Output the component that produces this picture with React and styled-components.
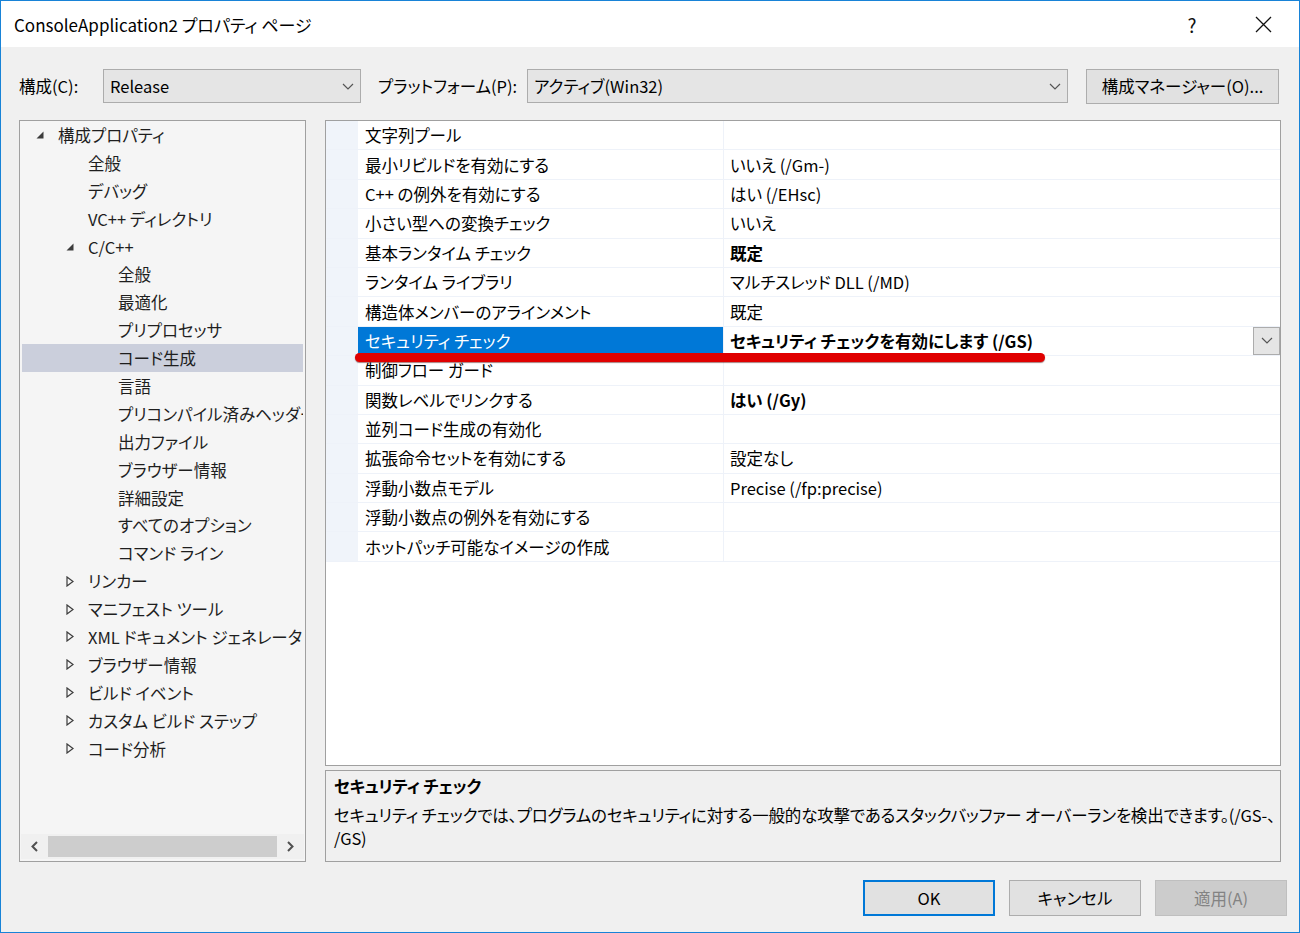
import React from 'react';
import styled, { createGlobalStyle } from 'styled-components';

const GlobalStyle = createGlobalStyle`
  html, body { margin: 0; padding: 0; background: #ffffff; }
  body {
    font-family: "Noto Sans CJK JP", "Noto Sans", sans-serif;
    color: #000;
  }
  * { box-sizing: border-box; }
`;

const treeItems = [
  { label: '構成プロパティ', depth: 0, toggle: 'open' },
  { label: '全般', depth: 1 },
  { label: 'デバッグ', depth: 1 },
  { label: 'VC++ ディレクトリ', depth: 1 },
  { label: 'C/C++', depth: 1, toggle: 'open' },
  { label: '全般', depth: 2 },
  { label: '最適化', depth: 2 },
  { label: 'プリプロセッサ', depth: 2 },
  { label: 'コード生成', depth: 2, selected: true },
  { label: '言語', depth: 2 },
  { label: 'プリコンパイル済みヘッダー', depth: 2 },
  { label: '出力ファイル', depth: 2 },
  { label: 'ブラウザー情報', depth: 2 },
  { label: '詳細設定', depth: 2 },
  { label: 'すべてのオプション', depth: 2 },
  { label: 'コマンド ライン', depth: 2 },
  { label: 'リンカー', depth: 1, toggle: 'closed' },
  { label: 'マニフェスト ツール', depth: 1, toggle: 'closed' },
  { label: 'XML ドキュメント ジェネレーター', depth: 1, toggle: 'closed' },
  { label: 'ブラウザー情報', depth: 1, toggle: 'closed' },
  { label: 'ビルド イベント', depth: 1, toggle: 'closed' },
  { label: 'カスタム ビルド ステップ', depth: 1, toggle: 'closed' },
  { label: 'コード分析', depth: 1, toggle: 'closed' },
];

const props = [
  ['文字列プール', ''],
  ['最小リビルドを有効にする', 'いいえ (/Gm-)'],
  ['C++ の例外を有効にする', 'はい (/EHsc)'],
  ['小さい型への変換チェック', 'いいえ'],
  ['基本ランタイム チェック', '既定', true],
  ['ランタイム ライブラリ', 'マルチスレッド DLL (/MD)'],
  ['構造体メンバーのアラインメント', '既定'],
  ['セキュリティ チェック', 'セキュリティ チェックを有効にします (/GS)', true, true],
  ['制御フロー ガード', ''],
  ['関数レベルでリンクする', 'はい (/Gy)', true],
  ['並列コード生成の有効化', ''],
  ['拡張命令セットを有効にする', '設定なし'],
  ['浮動小数点モデル', 'Precise (/fp:precise)'],
  ['浮動小数点の例外を有効にする', ''],
  ['ホットパッチ可能なイメージの作成', ''],
];

const Window = styled.div`
  width: 1300px;
  height: 933px;
  border: 1px solid #1883d7;
  background: #f0f0f0;
  display: flex;
  flex-direction: column;
  font-size: 16.5px;
  font-feature-settings: "palt";
`;

const TitleBar = styled.div`
  height: 46px;
  background: #ffffff;
  display: flex;
  align-items: center;
  padding-left: 13px;
  padding-right: 6px;
`;

const Title = styled.div`
  flex: 1;
  font-size: 17px;
  color: #000;
`;

const TitleButton = styled.div`
  width: ${p => p.$w}px;
  height: 46px;
  display: flex;
  align-items: center;
  justify-content: center;
  font-size: 19px;
  color: #111;
`;

const Body = styled.div`
  flex: 1;
  display: flex;
  flex-direction: column;
  padding: 22px 12px 16px 18px;
`;

const Toolbar = styled.div`
  height: 34px;
  display: flex;
  align-items: center;
`;

const Label = styled.div`
  width: ${p => p.$w}px;
  flex-shrink: 0;
`;

const Combo = styled.div`
  width: ${p => p.$w}px;
  height: 34px;
  background: #e5e5e5;
  border: 1px solid #acacac;
  display: flex;
  align-items: center;
  justify-content: space-between;
  padding: 0 6px 0 6px;
  margin-right: ${p => p.$mr || 0}px;
`;

const Button = styled.div`
  width: ${p => p.$w}px;
  height: ${p => p.$h || 36}px;
  display: flex;
  align-items: center;
  justify-content: center;
  background: ${p => (p.$disabled ? '#cccccc' : '#e1e1e1')};
  border: ${p => (p.$default ? '2px solid #0078d7' : p.$disabled ? '1px solid #bfbfbf' : '1px solid #adadad')};
  color: ${p => (p.$disabled ? '#838383' : '#000')};
`;

const Main = styled.div`
  margin-top: 17px;
  height: 742px;
  display: flex;
  gap: 19px;
`;

const TreePanel = styled.div`
  width: 287px;
  border: 1px solid #a0a0a0;
  background: #f5f5f5;
  display: flex;
  flex-direction: column;
  padding: 0 1px 2px 1px;
`;

const TreeList = styled.div`
  flex: 1;
  overflow: hidden;
`;

const TreeRow = styled.div`
  height: 27.9px;
  margin: 0 1px;
  display: flex;
  align-items: center;
  white-space: nowrap;
  overflow: hidden;
  padding-left: ${p => 12 + p.$depth * 30}px;
  background: ${p => (p.$selected ? '#cbcfdc' : 'transparent')};
  color: #1e1e1e;
`;

const Toggle = styled.span`
  width: 24px;
  flex-shrink: 0;
  display: flex;
  align-items: center;
  padding-left: 2px;
`;

const HScroll = styled.div`
  height: 25px;
  display: flex;
  align-items: center;
  background: #f0f0f0;
`;

const ScrollArrow = styled.div`
  width: 27px;
  height: 25px;
  display: flex;
  align-items: center;
  justify-content: center;
`;

const ScrollThumb = styled.div`
  flex: 1;
  height: 21px;
  background: #cdcdcd;
`;

const RightCol = styled.div`
  width: 956px;
  display: flex;
  flex-direction: column;
  gap: 4px;
`;

const Grid = styled.div`
  position: relative;
  height: 646px;
  border: 1px solid #a0a0a0;
  background: #ffffff;
`;

const GridRow = styled.div`
  height: 29.4px;
  display: flex;
  border-bottom: 1px solid #eef2f9;
`;

const Strip = styled.div`
  width: 32px;
  background: #f0f4fa;
`;

const NameCell = styled.div`
  width: 366px;
  display: flex;
  align-items: center;
  padding-left: 7px;
  border-right: 1px solid #eef2f9;
  background: ${p => (p.$selected ? '#0078d7' : 'transparent')};
  color: ${p => (p.$selected ? '#ffffff' : '#000')};
  white-space: nowrap;
`;

const ValueCell = styled.div`
  flex: 1;
  display: flex;
  align-items: center;
  justify-content: space-between;
  padding-left: 6px;
  font-weight: ${p => (p.$bold ? 700 : 400)};
  white-space: nowrap;
`;

const DropButton = styled.div`
  width: 27px;
  height: 28px;
  background: #e5e5e5;
  border: 1px solid #acacac;
  display: flex;
  align-items: center;
  justify-content: center;
`;

const Marker = styled.div`
  position: absolute;
  left: 29px;
  top: 232px;
  width: 690px;
  height: 9px;
  border-radius: 5px;
  background: #e00000;
  box-shadow: 0 1px 1px rgba(80, 0, 0, 0.5);
`;

const Description = styled.div`
  height: 92px;
  border: 1px solid #a0a0a0;
  background: #f0f0f0;
  padding: 4px 4px 0 8px;
  line-height: 23px;
  letter-spacing: -0.2px;
`;

const DescTitle = styled.div`
  font-weight: 700;
  margin-bottom: 6px;
`;

const Footer = styled.div`
  margin-top: 18px;
  display: flex;
  justify-content: flex-end;
  gap: 14px;
`;

const OpenTri = () => (
  <svg width="8" height="8" viewBox="0 0 8 8">
    <polygon points="7.5,0.5 7.5,7.5 0.5,7.5" fill="#3c3c3c" />
  </svg>
);

const ClosedTri = () => (
  <svg width="8" height="11" viewBox="0 0 8 11">
    <polygon points="1,1 7,5.5 1,10" fill="none" stroke="#3c3c3c" strokeWidth="1.2" />
  </svg>
);

const Chevron = ({ color = '#555' }) => (
  <svg width="12" height="7" viewBox="0 0 12 7">
    <polyline points="1,1 6,6 11,1" fill="none" stroke={color} strokeWidth="1.2" />
  </svg>
);

const SideChevron = ({ dir }) => (
  <svg width="7" height="11" viewBox="0 0 7 11">
    <polyline
      points={dir === 'left' ? '6,1 1.5,5.5 6,10' : '1,1 5.5,5.5 1,10'}
      fill="none"
      stroke="#505050"
      strokeWidth="2"
    />
  </svg>
);

const CloseIcon = () => (
  <svg width="17" height="17" viewBox="0 0 17 17">
    <path d="M1 1 L16 16 M16 1 L1 16" stroke="#111" strokeWidth="1.3" />
  </svg>
);

export default function App() {
  return (
    <>
      <GlobalStyle />
      <Window>
        <TitleBar>
          <Title>ConsoleApplication2 プロパティ ページ</Title>
          <TitleButton $w={40}>?</TitleButton>
          <TitleButton $w={21} />
          <TitleButton $w={60}><CloseIcon /></TitleButton>
        </TitleBar>

        <Body>
          <Toolbar>
            <Label $w={84}>構成(C):</Label>
            <Combo $w={258} $mr={17}>
              <span>Release</span>
              <Chevron />
            </Combo>
            <Label $w={149}>プラットフォーム(P):</Label>
            <Combo $w={541} $mr={18}>
              <span>アクティブ(Win32)</span>
              <Chevron />
            </Combo>
            <Button $w={193} $h={35}>構成マネージャー(O)...</Button>
          </Toolbar>

          <Main>
            <TreePanel>
              <TreeList>
                {treeItems.map((item, i) => (
                  <TreeRow key={i} $depth={item.depth} $selected={item.selected}>
                    <Toggle>
                      {item.toggle === 'open' && <OpenTri />}
                      {item.toggle === 'closed' && <ClosedTri />}
                    </Toggle>
                    {item.label}
                  </TreeRow>
                ))}
              </TreeList>
              <HScroll>
                <ScrollArrow><SideChevron dir="left" /></ScrollArrow>
                <ScrollThumb />
                <ScrollArrow><SideChevron dir="right" /></ScrollArrow>
              </HScroll>
            </TreePanel>

            <RightCol>
              <Grid>
                {props.map(([name, value, bold, selected], i) => (
                  <GridRow key={i}>
                    <Strip />
                    <NameCell $selected={selected}>{name}</NameCell>
                    <ValueCell $bold={bold}>
                      <span>{value}</span>
                      {selected && (
                        <DropButton><Chevron /></DropButton>
                      )}
                    </ValueCell>
                  </GridRow>
                ))}
                <Marker />
              </Grid>
              <Description>
                <DescTitle>セキュリティ チェック</DescTitle>
                セキュリティ チェックでは、プログラムのセキュリティに対する一般的な攻撃であるスタックバッファー オーバーランを検出できます。(/GS-、<wbr />/GS)
              </Description>
            </RightCol>
          </Main>

          <Footer>
            <Button $w={132} $default>OK</Button>
            <Button $w={132}>キャンセル</Button>
            <Button $w={132} $disabled>適用(A)</Button>
          </Footer>
        </Body>
      </Window>
    </>
  );
}
